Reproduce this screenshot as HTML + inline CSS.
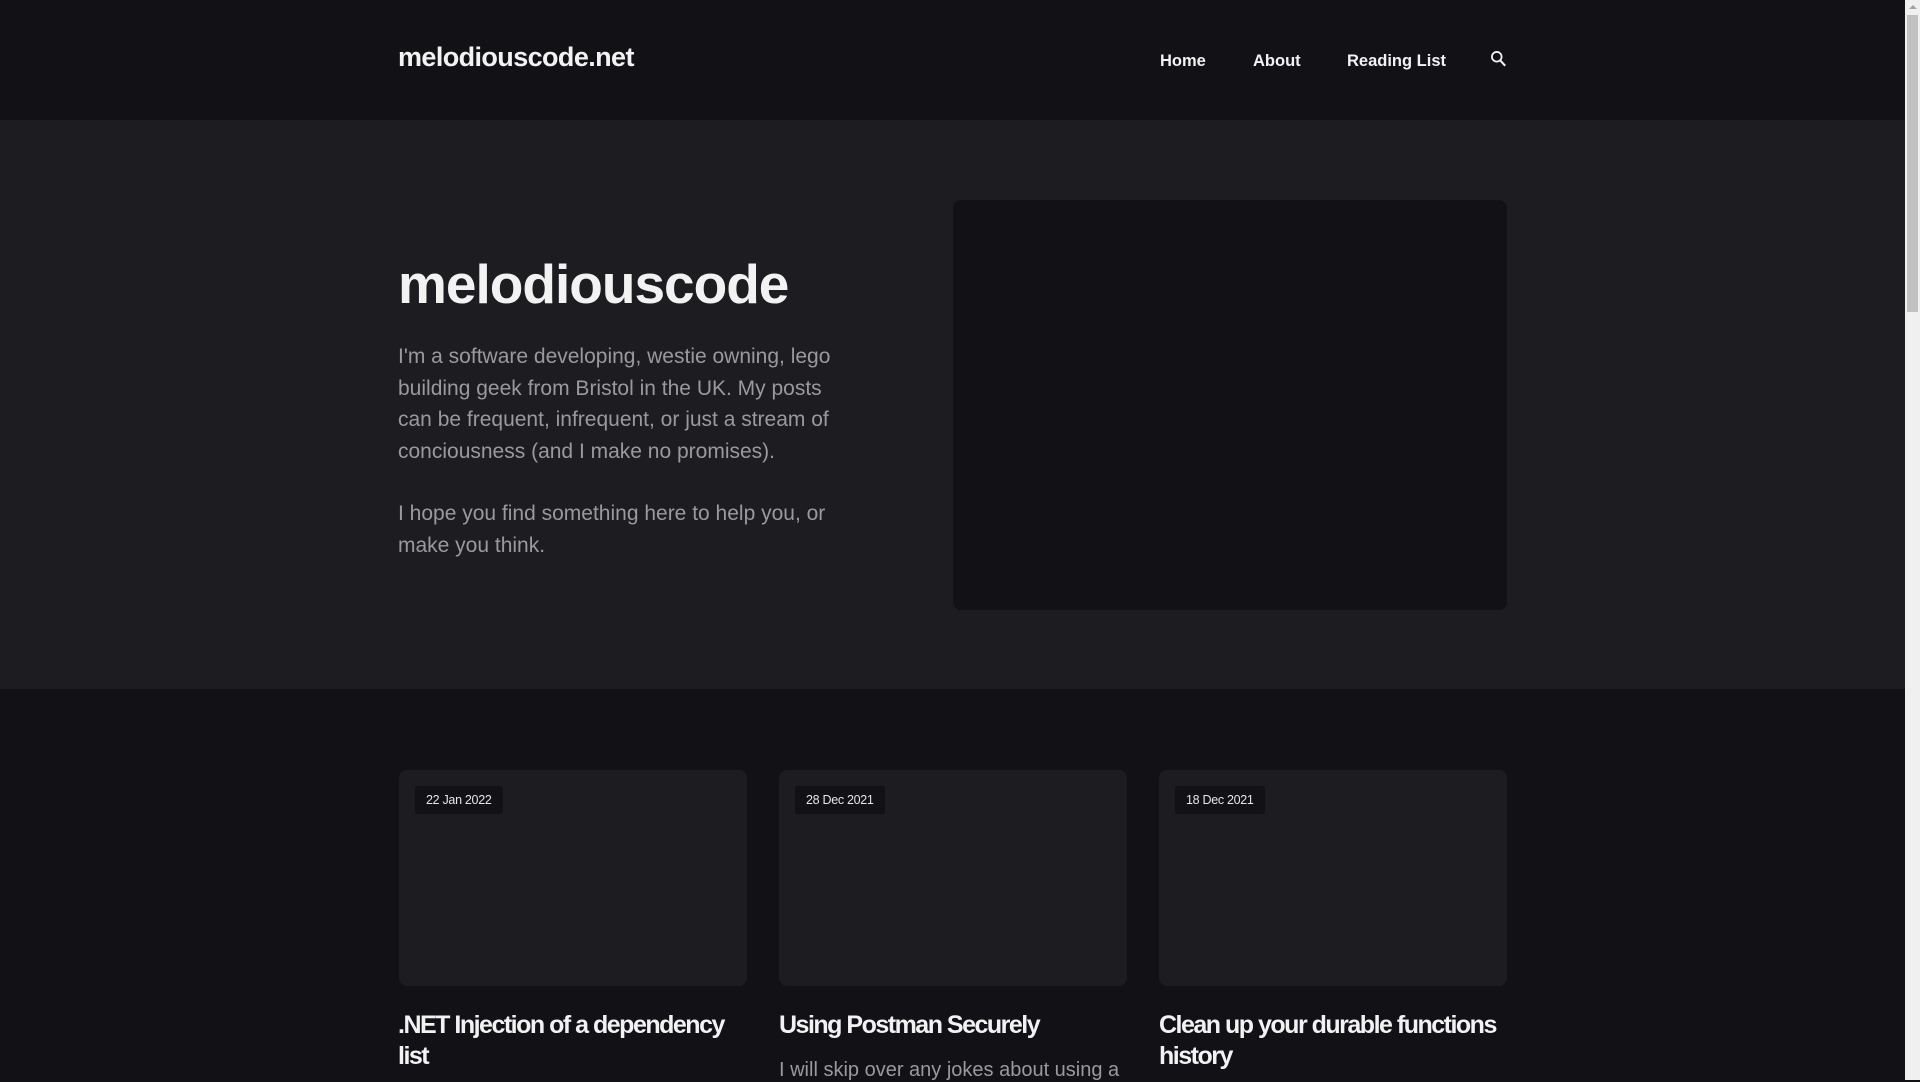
<!DOCTYPE html>
<html><head><meta charset="utf-8"><style>
*{margin:0;padding:0;box-sizing:border-box}
html,body{width:1920px;height:1080px;overflow:hidden;background:#111116;font-family:"Liberation Sans",sans-serif}
.sb{position:absolute;left:1905px;top:0;width:15px;height:1080px;background:#f0f0f0}
.sb .th{position:absolute;left:2px;top:15px;width:11px;height:297px;background:#c1c1c1}
.sb .ar{position:absolute;left:4px;top:5px;width:0;height:0;border-left:4px solid transparent;border-right:4px solid transparent;border-bottom:4px solid #a3a3a3}
header{position:absolute;left:0;top:0;width:1905px;height:120px;background:#111116}
.logo{position:absolute;left:398px;top:42px;font-size:27px;font-weight:bold;color:#f2f2f2;letter-spacing:-0.6px}
.nav{position:absolute;top:52px;font-size:16.5px;font-weight:bold;color:#f2f2f2}
.hero{position:absolute;left:0;top:120px;width:1905px;height:569px;background:#1c1c21}
h1{position:absolute;left:398px;top:252px;font-size:55px;font-weight:bold;color:#f2f2f2;letter-spacing:-1px;line-height:64px}
.p{position:absolute;left:398px;width:450px;font-size:21px;line-height:31.6px;color:#9a9a9e}
.img{position:absolute;left:953px;top:200px;width:554px;height:410px;background:#111116;border-radius:8px}
.card{position:absolute;top:770px;width:348px;height:216px;background:#1c1c21;border-radius:8px}
.badge{position:absolute;left:16px;top:16px;height:28px;padding:0 11px;background:#111116;border-radius:3px;color:#e6e6e6;font-size:12.5px;line-height:28px;letter-spacing:-0.3px}
.t{position:absolute;top:1010px;width:350px;font-size:25px;line-height:31px;font-weight:bold;color:#f2f2f2;letter-spacing:-1.5px}
.ex{position:absolute;top:1059px;font-size:20px;color:#9a9a9e;white-space:nowrap}
</style></head><body>
<header>
<div class="logo">melodiouscode.net</div>
<div class="nav" style="left:1160px">Home</div>
<div class="nav" style="left:1253px">About</div>
<div class="nav" style="left:1347px">Reading List</div>
<svg style="position:absolute;left:1490px;top:50px" width="18" height="18" viewBox="0 0 16 16"><circle cx="6" cy="6" r="4.3" fill="none" stroke="#f2f2f2" stroke-width="1.6"/><path d="M9 9.2L13.5 14" stroke="#f2f2f2" stroke-width="1.8"/></svg>
</header>
<div class="hero">
</div>
<h1>melodiouscode</h1>
<div class="p" style="top:341px">I'm a software developing, westie owning, lego building geek from Bristol in the UK. My posts can be frequent, infrequent, or just a stream of conciousness (and I make no promises).</div>
<div class="p" style="top:498px">I hope you find something here to help you, or make you think.</div>
<div class="img"></div>
<div class="card" style="left:399px"><div class="badge">22 Jan 2022</div></div>
<div class="card" style="left:779px"><div class="badge">28 Dec 2021</div></div>
<div class="card" style="left:1159px"><div class="badge">18 Dec 2021</div></div>
<div class="t" style="left:398px">.NET Injection of a dependency list</div>
<div class="t" style="left:779px">Using Postman Securely</div>
<div class="ex" style="left:779px">I will skip over any jokes about using a</div>
<div class="t" style="left:1159px">Clean up your durable functions history</div>
<div class="sb"><div class="ar"></div><div class="th"></div></div>
</body></html>
